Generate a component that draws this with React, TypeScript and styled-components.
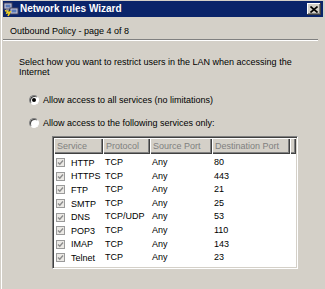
import React from 'react';
import styled, { createGlobalStyle } from 'styled-components';

const Global = createGlobalStyle`
  html, body { margin: 0; padding: 0; background: #d4d0c8; }
  body {
    font-family: "Liberation Sans", Arial, sans-serif;
    font-size: 9px;
    color: #000;
  }
  * { box-sizing: border-box; }
`;

const Window = styled.div`
  width: 325px;
  height: 289px;
  overflow: hidden;
  background: #d4d0c8;
  padding: 1px 2px 0 3px;
  display: flex;
  flex-direction: column;
  box-shadow: inset 1px 0 0 #d4d0c8, inset 2px 0 0 #ffffff;
`;

const TitleBar = styled.div`
  height: 16px;
  background: #0a246a;
  display: flex;
  align-items: center;
  padding: 0 2px 0 0;
  gap: 1px;
`;

const TitleText = styled.span`
  font-size: 10px;
  font-weight: bold;
  color: #fff;
  line-height: 16px;
  white-space: nowrap;
`;

const CloseButton = styled.div`
  margin-left: auto;
  width: 14px;
  height: 12px;
  background: #d4d0c8;
  display: flex;
  align-items: center;
  justify-content: center;
  box-shadow: inset -1px -1px 0 #404040, inset 1px 1px 0 #ffffff,
    inset -2px -2px 0 #808080;
`;

const Header = styled.div`
  height: 22px;
  padding: 9px 0 0 7px;
  line-height: 10px;
`;

const Separator = styled.div`
  width: 315px;
  height: 2px;
  border-top: 1px solid #808080;
  border-bottom: 1px solid #ffffff;
`;

const Body = styled.div`
  padding: 16px 0 0 16px;
  display: flex;
  flex-direction: column;
`;

const Intro = styled.p`
  margin: 0;
  width: 295px;
  line-height: 10px;
`;

const RadioGroup = styled.div`
  margin-top: 17px;
  display: flex;
  flex-direction: column;
  gap: 11px;
  padding-left: 10px;
`;

const RadioRow = styled.label`
  height: 12px;
  display: flex;
  align-items: center;
  gap: 4px;
  white-space: nowrap;
`;

const RadioCircle = styled.span<{ $checked?: boolean }>`
  width: 10px;
  height: 10px;
  border-radius: 50%;
  background: #fff;
  border: 1px solid;
  border-color: #808080 #ffffff #ffffff #808080;
  box-shadow: inset 1px 1px 0 #404040;
  display: flex;
  align-items: center;
  justify-content: center;
  &::after {
    content: '';
    width: 4px;
    height: 4px;
    border-radius: 50%;
    background: ${(p) => (p.$checked ? '#000' : 'transparent')};
  }
`;

const ListBox = styled.div`
  margin: 7px 0 0 33px;
  width: 246px;
  height: 133px;
  background: #fff;
  border: 1px solid;
  border-color: #808080 #ffffff #ffffff #808080;
  box-shadow: inset 1px 1px 0 #404040, inset -1px -1px 0 #d4d0c8;
  padding: 1px;
  display: flex;
  flex-direction: column;
`;

const cols = '49px 47px 62px 78px 1fr';

const HeaderRow = styled.div`
  display: grid;
  grid-template-columns: ${cols};
  height: 16px;
  flex: none;
`;

const HeaderCell = styled.div`
  background: #d4d0c8;
  color: #808080;
  padding-left: 3px;
  line-height: 16px;
  white-space: nowrap;
  overflow: hidden;
  box-shadow: inset 1px 1px 0 #ffffff, inset -1px -1px 0 #404040,
    inset -2px -2px 0 #808080;
`;

const RowList = styled.div`
  padding-top: 2px;
  display: flex;
  flex-direction: column;
`;

const Row = styled.div`
  display: grid;
  grid-template-columns: ${cols};
  height: 13.6px;
  align-items: center;
`;

const Cell = styled.div`
  padding-left: 2px;
  white-space: nowrap;
  overflow: hidden;
  line-height: 13.6px;
`;

const ServiceCell = styled.div`
  display: flex;
  align-items: center;
  gap: 6px;
  padding-left: 2px;
  white-space: nowrap;
  overflow: hidden;
`;

const CheckBox = styled.span`
  flex: none;
  width: 9px;
  height: 9px;
  background: #ebe9e5;
  border: 1px solid #9a9a9a;
  display: flex;
  align-items: center;
  justify-content: center;
`;

const NetIcon = () => (
  <svg width="16" height="16" viewBox="0 0 16 16">
    <rect x="1" y="2" width="8" height="6" fill="#c8c8d8" stroke="#404060" strokeWidth="1" />
    <rect x="2.5" y="3.5" width="5" height="3" fill="#5a7ab8" />
    <rect x="7" y="7" width="8" height="6" fill="#c8c8d8" stroke="#404060" strokeWidth="1" />
    <rect x="8.5" y="8.5" width="5" height="3" fill="#5a7ab8" />
    <path d="M2 10 L5 9 L4 12 L7 11 L5 15" fill="none" stroke="#f0d020" strokeWidth="1.6" />
    <rect x="3" y="8" width="3" height="1.5" fill="#808090" />
  </svg>
);

const CloseX = () => (
  <svg width="8" height="7" viewBox="0 0 8 7">
    <path d="M0.5 0.5 L7.5 6.5 M7.5 0.5 L0.5 6.5" stroke="#000" strokeWidth="1.6" />
  </svg>
);

const Check = () => (
  <svg width="7" height="7" viewBox="0 0 7 7">
    <path d="M1 3.5 L2.8 5.3 L6 1.5" fill="none" stroke="#8c8c8c" strokeWidth="1.4" />
  </svg>
);

const rows: [string, string, string, string][] = [
  ['HTTP', 'TCP', 'Any', '80'],
  ['HTTPS', 'TCP', 'Any', '443'],
  ['FTP', 'TCP', 'Any', '21'],
  ['SMTP', 'TCP', 'Any', '25'],
  ['DNS', 'TCP/UDP', 'Any', '53'],
  ['POP3', 'TCP', 'Any', '110'],
  ['IMAP', 'TCP', 'Any', '143'],
  ['Telnet', 'TCP', 'Any', '23'],
];

export default function App() {
  return (
    <>
      <Global />
      <Window>
        <TitleBar>
          <NetIcon />
          <TitleText>Network rules Wizard</TitleText>
          <CloseButton>
            <CloseX />
          </CloseButton>
        </TitleBar>
        <Header>Outbound Policy - page 4 of 8</Header>
        <Separator />
        <Body>
          <Intro>
            Select how you want to restrict users in the LAN when accessing the Internet
          </Intro>
          <RadioGroup>
            <RadioRow>
              <RadioCircle $checked />
              Allow access to all services (no limitations)
            </RadioRow>
            <RadioRow>
              <RadioCircle />
              Allow access to the following services only:
            </RadioRow>
          </RadioGroup>
          <ListBox>
            <HeaderRow>
              <HeaderCell>Service</HeaderCell>
              <HeaderCell>Protocol</HeaderCell>
              <HeaderCell>Source Port</HeaderCell>
              <HeaderCell>Destination Port</HeaderCell>
              <HeaderCell />
            </HeaderRow>
            <RowList>
              {rows.map(([svc, proto, src, dst]) => (
                <Row key={svc}>
                  <ServiceCell>
                    <CheckBox>
                      <Check />
                    </CheckBox>
                    {svc}
                  </ServiceCell>
                  <Cell>{proto}</Cell>
                  <Cell>{src}</Cell>
                  <Cell>{dst}</Cell>
                  <Cell />
                </Row>
              ))}
            </RowList>
          </ListBox>
        </Body>
      </Window>
    </>
  );
}
